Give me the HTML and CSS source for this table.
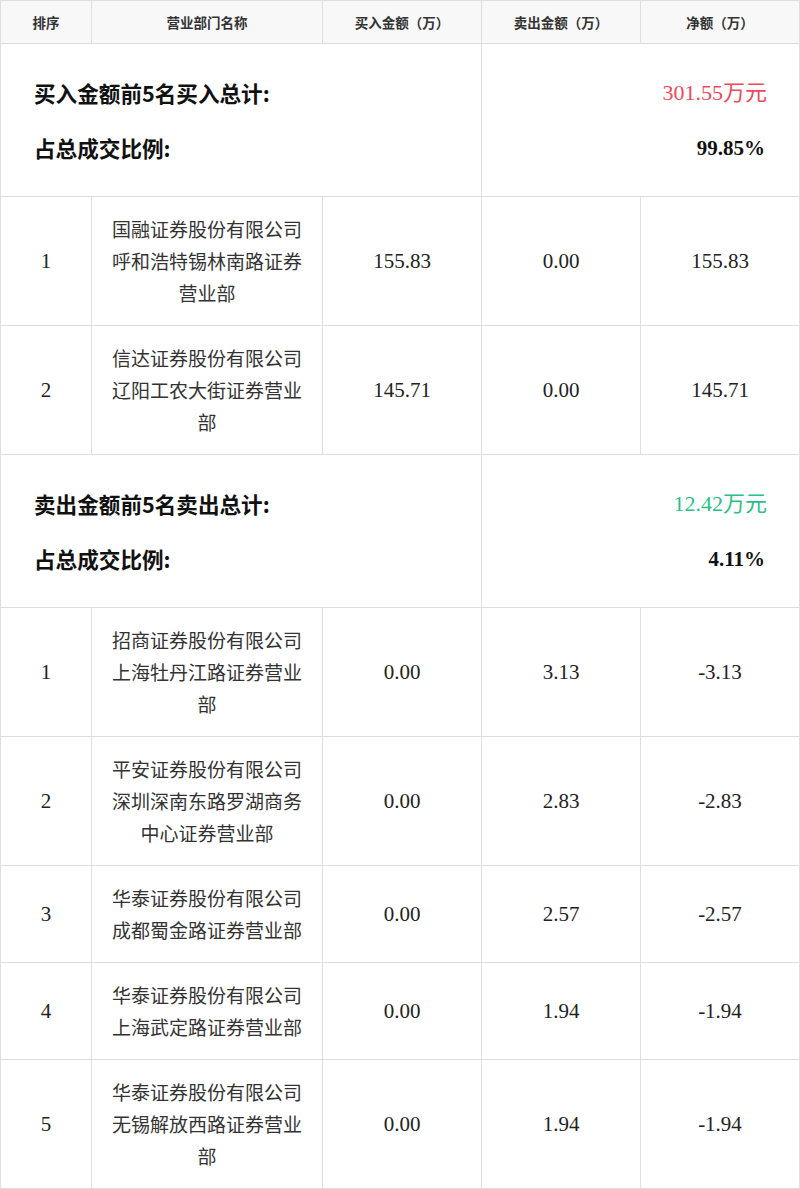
FILE: index.html
```html
<!DOCTYPE html>
<html lang="zh-CN">
<head>
<meta charset="utf-8">
<title>营业部</title>
<link rel="stylesheet" href="styles.css">
</head>
<body>
<table class="lhb">
  <colgroup>
    <col class="c-rank">
    <col class="c-name">
    <col class="c-num">
    <col class="c-num">
    <col class="c-num">
  </colgroup>
  <thead>
    <tr>
      <th>排序</th>
      <th>营业部门名称</th>
      <th>买入金额（万）</th>
      <th>卖出金额（万）</th>
      <th>净额（万）</th>
    </tr>
  </thead>
  <tbody>
    <tr class="sum">
      <td colspan="3" class="sum-label">
        <div class="sum-line">买入金额前5名买入总计:</div>
        <div class="sum-line">占总成交比例:</div>
      </td>
      <td colspan="2" class="sum-value">
        <div class="sum-line amt up">301.55万元</div>
        <div class="sum-line pct">99.85%</div>
      </td>
    </tr>
    <tr>
      <td>1</td>
      <td class="name">国融证券股份有限公司呼和浩特锡林南路证券营业部</td>
      <td>155.83</td>
      <td>0.00</td>
      <td>155.83</td>
    </tr>
    <tr>
      <td>2</td>
      <td class="name">信达证券股份有限公司辽阳工农大街证券营业部</td>
      <td>145.71</td>
      <td>0.00</td>
      <td>145.71</td>
    </tr>
    <tr class="sum">
      <td colspan="3" class="sum-label">
        <div class="sum-line">卖出金额前5名卖出总计:</div>
        <div class="sum-line">占总成交比例:</div>
      </td>
      <td colspan="2" class="sum-value">
        <div class="sum-line amt down">12.42万元</div>
        <div class="sum-line pct">4.11%</div>
      </td>
    </tr>
    <tr>
      <td>1</td>
      <td class="name">招商证券股份有限公司上海牡丹江路证券营业部</td>
      <td>0.00</td>
      <td>3.13</td>
      <td>-3.13</td>
    </tr>
    <tr>
      <td>2</td>
      <td class="name">平安证券股份有限公司深圳深南东路罗湖商务中心证券营业部</td>
      <td>0.00</td>
      <td>2.83</td>
      <td>-2.83</td>
    </tr>
    <tr>
      <td>3</td>
      <td class="name">华泰证券股份有限公司成都蜀金路证券营业部</td>
      <td>0.00</td>
      <td>2.57</td>
      <td>-2.57</td>
    </tr>
    <tr>
      <td>4</td>
      <td class="name">华泰证券股份有限公司上海武定路证券营业部</td>
      <td>0.00</td>
      <td>1.94</td>
      <td>-1.94</td>
    </tr>
    <tr>
      <td>5</td>
      <td class="name">华泰证券股份有限公司无锡解放西路证券营业部</td>
      <td>0.00</td>
      <td>1.94</td>
      <td>-1.94</td>
    </tr>
  </tbody>
</table>
</body>
</html>
```

FILE: styles.css
```css
html, body {
  margin: 0;
  padding: 0;
  background: #ffffff;
}

.lhb {
  width: 800px;
  border-collapse: collapse;
  table-layout: fixed;
  font-family: "Liberation Serif", "Noto Sans CJK SC", serif;
  color: #222;
}

.c-rank { width: 91px; }
.c-name { width: 231px; }
.c-num { width: 159px; }

.lhb th,
.lhb td {
  border: 1px solid #dedede;
  text-align: center;
  vertical-align: middle;
}

.lhb th {
  height: 42px;
  padding: 0;
  background: #f8f8f8;
  font-family: "Noto Sans CJK SC", sans-serif;
  font-size: 13.5px;
  font-weight: bold;
  color: #333;
  line-height: 20px;
}

.lhb td {
  padding: 16px 10px;
  font-size: 21px;
  line-height: 32px;
}

.lhb td.name {
  padding: 16px 18px;
  font-family: "Noto Sans CJK SC", sans-serif;
  font-size: 19px;
  color: #333;
}

.lhb td.sum-label,
.lhb td.sum-value {
  padding: 33px 32px 32px 33px;
}

.sum-label {
  text-align: left !important;
}

.sum-value {
  text-align: right !important;
}

.sum-line {
  line-height: 32px;
  height: 32px;
  font-weight: bold;
  font-size: 21px;
  color: #111;
}

.sum-line + .sum-line {
  margin-top: 23px;
}

.sum-label .sum-line {
  font-family: "Noto Sans CJK SC", sans-serif;
  font-size: 21.6px;
}

.sum-value .amt {
  font-weight: normal;
  font-size: 22px;
}

.up { color: #f0485a !important; }
.down { color: #2bbf86 !important; }

.pct {
  font-family: "Liberation Serif", serif;
  padding-right: 2px;
}
```
